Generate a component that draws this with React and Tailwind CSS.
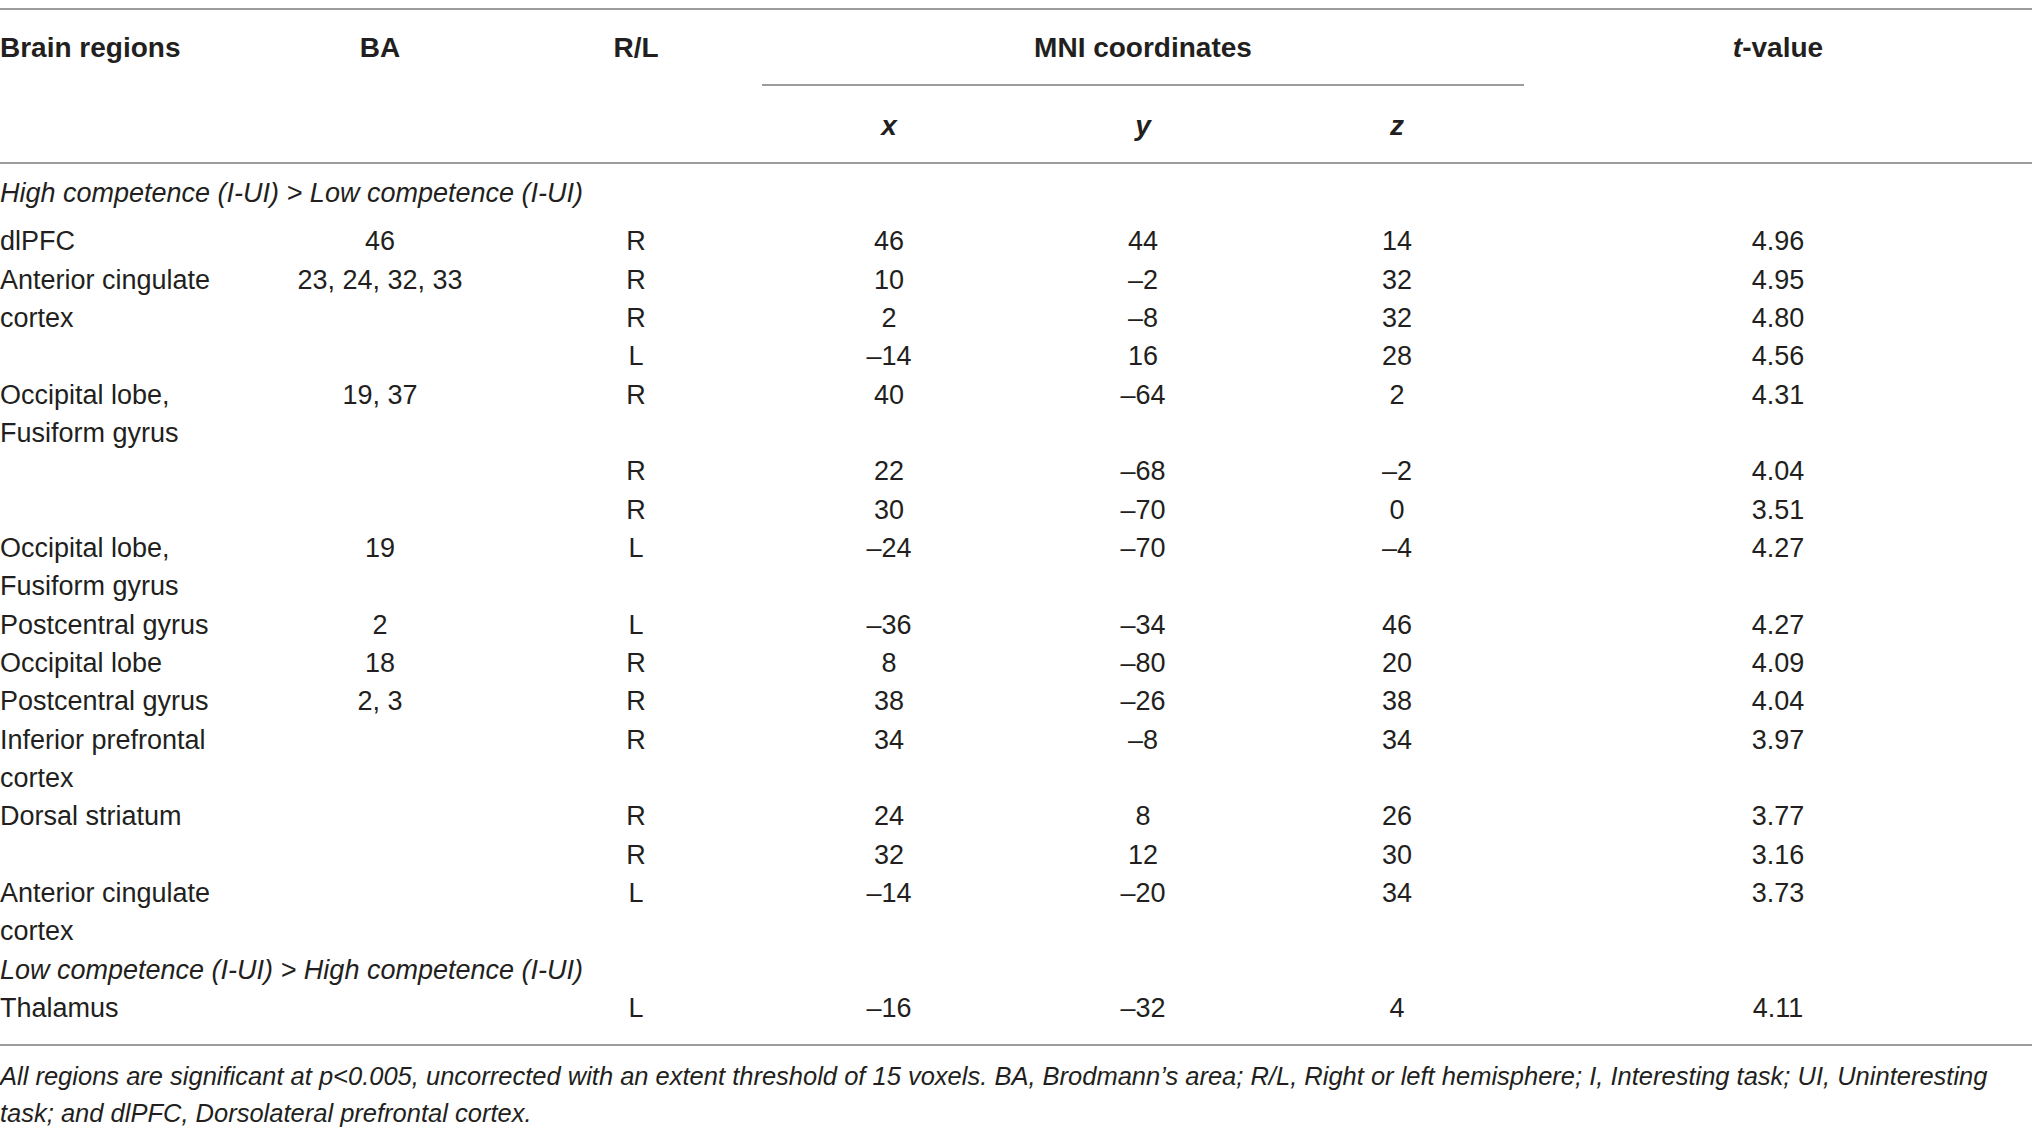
const COLS = "grid grid-cols-[250px_260px_252px_254px_254px_254px_508px]";

const lines = [
  ["dlPFC", "46", "R", "46", "44", "14", "4.96"],
  ["Anterior cingulate", "23, 24, 32, 33", "R", "10", "–2", "32", "4.95"],
  ["cortex", "", "R", "2", "–8", "32", "4.80"],
  ["", "", "L", "–14", "16", "28", "4.56"],
  ["Occipital lobe,", "19, 37", "R", "40", "–64", "2", "4.31"],
  ["Fusiform gyrus", "", "", "", "", "", ""],
  ["", "", "R", "22", "–68", "–2", "4.04"],
  ["", "", "R", "30", "–70", "0", "3.51"],
  ["Occipital lobe,", "19", "L", "–24", "–70", "–4", "4.27"],
  ["Fusiform gyrus", "", "", "", "", "", ""],
  ["Postcentral gyrus", "2", "L", "–36", "–34", "46", "4.27"],
  ["Occipital lobe", "18", "R", "8", "–80", "20", "4.09"],
  ["Postcentral gyrus", "2, 3", "R", "38", "–26", "38", "4.04"],
  ["Inferior prefrontal", "", "R", "34", "–8", "34", "3.97"],
  ["cortex", "", "", "", "", "", ""],
  ["Dorsal striatum", "", "R", "24", "8", "26", "3.77"],
  ["", "", "R", "32", "12", "30", "3.16"],
  ["Anterior cingulate", "", "L", "–14", "–20", "34", "3.73"],
  ["cortex", "", "", "", "", "", ""],
];

function Row({ cells }) {
  return (
    <div className={`${COLS} h-[38.33px] items-center leading-[38px]`}>
      <div className="whitespace-nowrap">{cells[0]}</div>
      {cells.slice(1).map((c, i) => (
        <div key={i} className="text-center whitespace-nowrap">
          {c}
        </div>
      ))}
    </div>
  );
}

function Section({ children }) {
  return <div className="h-[38.33px] leading-[38px] italic whitespace-nowrap">{children}</div>;
}

export default function App() {
  return (
    <div className="w-[2032px] min-h-[1135px] bg-white text-[#231f20] text-[27px] font-['Liberation_Sans',Arial,sans-serif]">
      <div className="h-[8px]" />
      <div className="h-[2px] bg-[#9c9c9c]" />

      {/* header */}
      <div className={`${COLS} grid-rows-[76px_76px] font-bold text-[28px]`}>
        <div className="row-span-2 pt-[20px] leading-[36px] whitespace-nowrap">Brain regions</div>
        <div className="row-span-2 pt-[20px] leading-[36px] text-center">BA</div>
        <div className="row-span-2 pt-[20px] leading-[36px] text-center">R/L</div>
        <div className="col-span-3 pt-[20px] leading-[36px] text-center border-b-2 border-[#9c9c9c]">
          MNI coordinates
        </div>
        <div className="row-span-2 pt-[20px] leading-[36px] text-center">
          <i>t</i>-value
        </div>
        <div className="pt-[22px] leading-[36px] text-center italic">x</div>
        <div className="pt-[22px] leading-[36px] text-center italic">y</div>
        <div className="pt-[22px] leading-[36px] text-center italic">z</div>
      </div>
      <div className="h-[2px] bg-[#9c9c9c]" />

      {/* body */}
      <div className="pt-[10px]">
        <Section>High competence (I-UI) &gt; Low competence (I-UI)</Section>
        <div className="mt-[10px]">
          {lines.map((l, i) => (
            <Row key={i} cells={l} />
          ))}
          <Section>Low competence (I-UI) &gt; High competence (I-UI)</Section>
          <Row cells={["Thalamus", "", "L", "–16", "–32", "4", "4.11"]} />
        </div>
      </div>

      <div className="mt-[17px] h-[2px] bg-[#9c9c9c]" />
      <p className="pt-[12px] italic text-[25.5px] leading-[37px] whitespace-nowrap">
        All regions are significant at p&lt;0.005, uncorrected with an extent threshold of 15 voxels. BA, Brodmann’s area; R/L, Right or left hemisphere; I, Interesting task; UI, Uninteresting
        <br />
        task; and dlPFC, Dorsolateral prefrontal cortex.
      </p>
    </div>
  );
}
